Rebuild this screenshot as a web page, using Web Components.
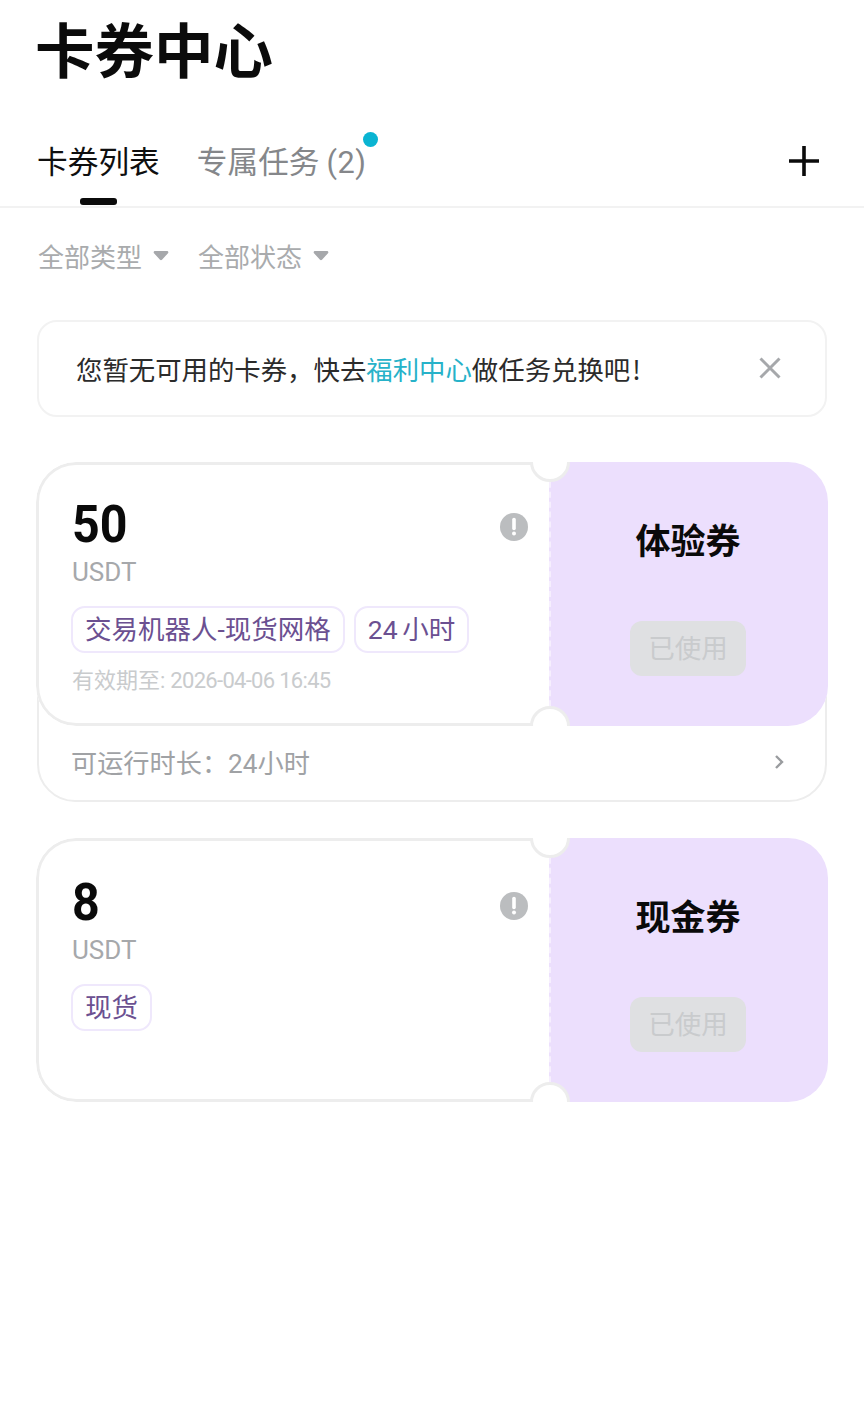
<!DOCTYPE html>
<html lang="zh">
<head>
<meta charset="utf-8">
<title>卡券中心</title>
<style>
  html, body { margin: 0; background: #fff; }
  body { font-family: Roboto, "Noto Sans CJK SC", sans-serif; width: 864px; min-height: 1414px; }
</style>
</head>
<body>
<page-title>卡券中心</page-title>
<tab-bar></tab-bar>
<filter-row></filter-row>
<notice-bar></notice-bar>
<coupon-card amount="50" kind="体验券" top="38" info-top="48" expiry="有效期至:" date="2026-04-06 16:45" footer="可运行时长：24小时">
  <coupon-tag>交易机器人-现货网格</coupon-tag>
  <coupon-tag>24 小时</coupon-tag>
</coupon-card>
<coupon-card amount="8" kind="现金券" top="40" info-top="51">
  <coupon-tag>现货</coupon-tag>
</coupon-card>

<script>
// Page title
class PageTitle extends HTMLElement {
  constructor() {
    super();
    this.attachShadow({ mode: 'open' });
    this.shadowRoot.innerHTML = `
      <style>
        :host {
          display: block;
          padding: 17px 0 0 35px;
          height: 100px;
          box-sizing: border-box;
          font: 700 59.5px/60px "Noto Sans CJK SC", sans-serif;
          color: #0b0b0b;
        }
      </style>
      <slot></slot>
    `;
  }
}

// Tabs with the add button
class TabBar extends HTMLElement {
  constructor() {
    super();
    this.attachShadow({ mode: 'open' });
    this.shadowRoot.innerHTML = `
      <style>
        :host {
          display: flex;
          align-items: flex-start;
          height: 108px;
          box-sizing: border-box;
          padding: 40px 44px 0 37px;
          border-bottom: 2px solid #f2f2f2;
          font: 400 30.7px/40px "Noto Sans CJK SC", sans-serif;
        }
        .tab { position: relative; color: #0f0f0f; }
        .tab.off { margin-left: 37px; color: #85878a; }
        .num { font-family: Roboto, sans-serif; letter-spacing: .5px; }
        .bar {
          position: absolute; left: 43px; top: 58px;
          width: 37px; height: 7px; border-radius: 3px; background: #0b0b0b;
        }
        .dot {
          position: absolute; right: -12px; top: -8px;
          width: 15px; height: 15px; border-radius: 50%; background: #0ab4d2;
        }
        svg { margin-left: auto; margin-top: 5px; }
      </style>
      <div class="tab">卡券列表<span class="bar"></span></div>
      <div class="tab off">专属任务 <span class="num">(2)</span><span class="dot"></span></div>
      <svg width="32" height="32" viewBox="0 0 32 32"><path d="M16 1v30M1 16h30" stroke="#0b0b0b" stroke-width="3.6" fill="none"/></svg>
    `;
  }
}

// Type and status dropdowns
class FilterRow extends HTMLElement {
  constructor() {
    super();
    this.attachShadow({ mode: 'open' });
    const caret = `<svg width="16" height="11" viewBox="0 0 16 11"><path d="M2 1h12c1.2 0 1.8 1.3 1 2.2L9 9.8c-.6.6-1.500.6-2 0L1 3.200C.2 2.300.8 1 2 1z" fill="#a6a8ab"/></svg>`;
    this.shadowRoot.innerHTML = `
      <style>
        :host {
          display: flex;
          gap: 29px;
          padding: 28px 0 0 38px;
          height: 112px;
          box-sizing: border-box;
          font: 400 26px/40px "Noto Sans CJK SC", sans-serif;
          color: #a9abad;
        }
        div { display: flex; align-items: flex-start; gap: 11px; }
        svg { margin-top: 14px; }
      </style>
      <div>全部类型${caret}</div>
      <div>全部状态${caret}</div>
    `;
  }
}

// Hint box above the coupons
class NoticeBar extends HTMLElement {
  constructor() {
    super();
    this.attachShadow({ mode: 'open' });
    this.shadowRoot.innerHTML = `
      <style>
        :host {
          display: flex;
          align-items: center;
          justify-content: space-between;
          box-sizing: border-box;
          width: 790px;
          height: 97px;
          margin: 0 0 45px 37px;
          padding: 0 44px 0 37px;
          border: 2px solid #f2f2f2;
          border-radius: 20px;
          font: 400 26.4px/40px "Noto Sans CJK SC", sans-serif;
          color: #2b2b2b;
        }
        a { color: #27b2c9; }
        b { font-weight: 400; margin-left: 2px; }
        svg { margin-top: -1px; }
      </style>
      <div>您暂无可用的卡券，快去<a>福利中心</a>做任务兑换吧<b>!</b></div>
      <svg width="22" height="22" viewBox="0 0 22 22"><path d="M1.500 1.500l19 19M20.500 1.500l-19 19" stroke="#a6a8ab" stroke-width="3" fill="none"/></svg>
    `;
  }
}

// Small outlined label
class CouponTag extends HTMLElement {
  constructor() {
    super();
    this.attachShadow({ mode: 'open' });
    this.shadowRoot.innerHTML = `
      <style>
        :host {
          display: inline-flex;
          align-items: center;
          box-sizing: border-box;
          height: 47px;
          padding: 0 12px;
          border: 2px solid #efe8fc;
          border-radius: 14px;
          font: 400 26.5px/36px Roboto, "Noto Sans CJK SC", sans-serif;
          word-spacing: -2px;
          color: #6b5091;
          white-space: nowrap;
        }
      </style>
      <slot></slot>
    `;
  }
}

// Ticket with notches, optional footer row below it
class CouponCard extends HTMLElement {
  constructor() {
    super();
    this.attachShadow({ mode: 'open' });
  }

  connectedCallback() {
    const amount = this.getAttribute('amount');
    const kind = this.getAttribute('kind');
    const expiry = this.getAttribute('expiry');
    const date = this.getAttribute('date');
    const footer = this.getAttribute('footer');
    const top = this.getAttribute('top');
    const infoTop = this.getAttribute('info-top');

    this.shadowRoot.innerHTML = `
      <style>
        :host {
          display: block;
          width: 791px;
          margin: 36px 0 0 36px;
          font-family: Roboto, "Noto Sans CJK SC", sans-serif;
        }
        .clip {
          position: relative;
          width: 792px;
          height: 264px;
          border-radius: 40px;
          overflow: hidden;
          background: #fff;
          z-index: 1;
        }
        .ticket { display: flex; height: 100%; }
        .left {
          flex: 0 0 513px;
          box-sizing: border-box;
          padding: ${top}px 0 0 33px;
          position: relative;
          border: solid #ededed;
          border-width: 3px 0 3px 3px;
          border-radius: 40px 0 0 40px;
        }
        .amount {
          font: 700 52px/44px Roboto, sans-serif;
          color: #0a0a0a;
          transform: scaleX(.93);
          transform-origin: left;
        }
        .unit { font-size: 26px; line-height: 32px; color: #a6a8ab; margin-top: 9px; }
        .tags { display: flex; gap: 9px; margin-top: 18px; margin-left: -1px; }
        .expiry {
          font: 400 22px/30px Roboto, "Noto Sans CJK SC", sans-serif;
          color: #c9cbcd; margin-top: 13px; white-space: nowrap;
        }
        .expiry span { letter-spacing: -.7px; margin-left: 5px; }
        .info {
          position: absolute; left: 461px; top: ${infoTop}px;
          width: 28px; height: 28px;
        }
        .right {
          flex: 1;
          box-sizing: border-box;
          background: #ecdffd;
          border-left: 2px dashed #f6effe;
          display: flex;
          flex-direction: column;
          align-items: center;
          padding: 55px 3px 0 0;
        }
        .kind { font: 700 35px/44px "Noto Sans CJK SC", sans-serif; color: #0a0a0a; }
        .used {
          margin-top: 60px;
          width: 116px; height: 55px;
          border-radius: 12px;
          background: #dfe0e2;
          color: #c9cbcd;
          font: 400 26.5px/52px "Noto Sans CJK SC", sans-serif;
          text-align: center;
        }
        .notch {
          position: absolute;
          left: 494px;
          width: 40px; height: 40px;
          box-sizing: border-box;
          border: 3px solid #ededed;
          border-radius: 50%;
          background: #fff;
        }
        .notch.t { top: -20px; }
        .notch.b { bottom: -20px; }
        .foot {
          display: flex;
          align-items: center;
          justify-content: space-between;
          box-sizing: border-box;
          height: 115px;
          margin: -39px 0 0 1px;
          padding: 39px 41px 0 32px;
          border: 2.5px solid #ededed;
          border-radius: 0 0 38px 38px;
          font: 400 26.2px/36px Roboto, "Noto Sans CJK SC", sans-serif;
          color: #a0a2a5;
        }
        .foot svg { margin-top: -4px; }
      </style>
      <div class="clip">
        <div class="ticket">
          <div class="left">
            <div class="amount">${amount}</div>
            <div class="unit">USDT</div>
            <div class="tags"><slot></slot></div>
            ${expiry ? `<div class="expiry">${expiry}<span>${date}</span></div>` : ''}
            <svg class="info" viewBox="0 0 28 28">
              <circle cx="14" cy="14" r="14" fill="#bbbdbf"/>
              <path d="M14 6.500v9" stroke="#fff" stroke-width="3.600" stroke-linecap="round"/>
              <circle cx="14" cy="20.500" r="2" fill="#fff"/>
            </svg>
          </div>
          <div class="right">
            <div class="kind">${kind}</div>
            <div class="used">已使用</div>
          </div>
        </div>
        <span class="notch t"></span>
        <span class="notch b"></span>
      </div>
      ${footer ? `<div class="foot"><span>${footer}</span>
        <svg width="10" height="16" viewBox="0 0 10 16"><path d="M2 2l6 6-6 6" stroke="#9a9c9f" stroke-width="2.400" fill="none"/></svg></div>` : ''}
    `;
  }
}

customElements.define('page-title', PageTitle);
customElements.define('tab-bar', TabBar);
customElements.define('filter-row', FilterRow);
customElements.define('notice-bar', NoticeBar);
customElements.define('coupon-tag', CouponTag);
customElements.define('coupon-card', CouponCard);
</script>
</body>
</html>
